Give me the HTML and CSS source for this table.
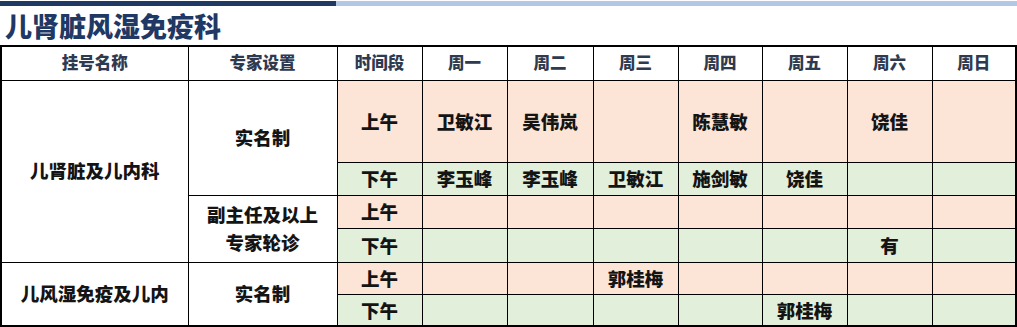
FILE: index.html
```html
<!DOCTYPE html>
<html lang="zh-CN">
<head>
<meta charset="utf-8">
<title>儿肾脏风湿免疫科</title>
<link rel="stylesheet" href="styles.css">
</head>
<body>
<div class="topbar"><div class="bar-dark"></div><div class="bar-light"></div></div>
<h1 class="title">儿肾脏风湿免疫科</h1>
<table class="sched">
  <colgroup>
    <col style="width:187px"><col style="width:149px"><col style="width:85px">
    <col style="width:85px"><col style="width:86px"><col style="width:85px"><col style="width:84px">
    <col style="width:85px"><col style="width:85px"><col style="width:84px">
  </colgroup>
  <tr class="hd">
    <th>挂号名称</th><th>专家设置</th><th>时间段</th><th>周一</th><th>周二</th><th>周三</th><th>周四</th><th>周五</th><th>周六</th><th>周日</th>
  </tr>
  <tr class="am r1">
    <td class="w" rowspan="4">儿肾脏及儿内科</td><td class="w" rowspan="2">实名制</td>
    <td>上午</td><td>卫敏江</td><td>吴伟岚</td><td></td><td>陈慧敏</td><td></td><td>饶佳</td><td></td>
  </tr>
  <tr class="pm r2">
    <td>下午</td><td>李玉峰</td><td>李玉峰</td><td>卫敏江</td><td>施剑敏</td><td>饶佳</td><td></td><td></td>
  </tr>
  <tr class="am r3">
    <td class="w" rowspan="2">副主任及以上<br>专家轮诊</td>
    <td>上午</td><td></td><td></td><td></td><td></td><td></td><td></td><td></td>
  </tr>
  <tr class="pm r4">
    <td>下午</td><td></td><td></td><td></td><td></td><td></td><td>有</td><td></td>
  </tr>
  <tr class="am r5">
    <td class="w" rowspan="2">儿风湿免疫及儿内</td><td class="w" rowspan="2">实名制</td>
    <td>上午</td><td></td><td></td><td>郭桂梅</td><td></td><td></td><td></td><td></td>
  </tr>
  <tr class="pm r6">
    <td>下午</td><td></td><td></td><td></td><td></td><td>郭桂梅</td><td></td><td></td>
  </tr>
</table>
</body>
</html>
```
FILE: styles.css
```css
html, body {
  margin: 0;
  padding: 0;
  background: #ffffff;
}
body {
  font-family: "Noto Sans CJK SC", "Noto Sans", sans-serif;
  width: 1017px;
}
.topbar {
  display: flex;
  padding-top: 1px;
  height: 5px;
}
.bar-dark {
  width: 336px;
  height: 5px;
  background: #1f3864;
}
.bar-light {
  flex: 1;
  height: 5px;
  background: #b4c7e7;
}
.title {
  margin: 0;
  height: 39px;
  line-height: 39px;
  padding-left: 5px;
  font-size: 27px;
  font-weight: 900;
  color: #1f3864;
  letter-spacing: 0;
}
.sched {
  border-collapse: collapse;
  table-layout: fixed;
  width: 1015px;
  border: 2px solid #000;
}
.sched th, .sched td {
  border: 1px solid #000;
  padding: 0;
  text-align: center;
  vertical-align: middle;
  font-weight: 900;
  line-height: 1.2;
}
.sched th {
  font-size: 16.5px;
  color: #2e3a50;
  background: #fff;
}
.sched td {
  font-size: 18.5px;
  color: #141414;
}
.hd { height: 34px; }
.r1 { height: 82px; }
.r2 { height: 33px; }
.r3 { height: 33px; }
.r4 { height: 34px; }
.r5 { height: 32px; }
.r6 { height: 32px; }
.am td { background: #fce4d6; }
.pm td { background: #e2efda; }
.sched td.w { background: #ffffff; line-height: 1.5; }
```
